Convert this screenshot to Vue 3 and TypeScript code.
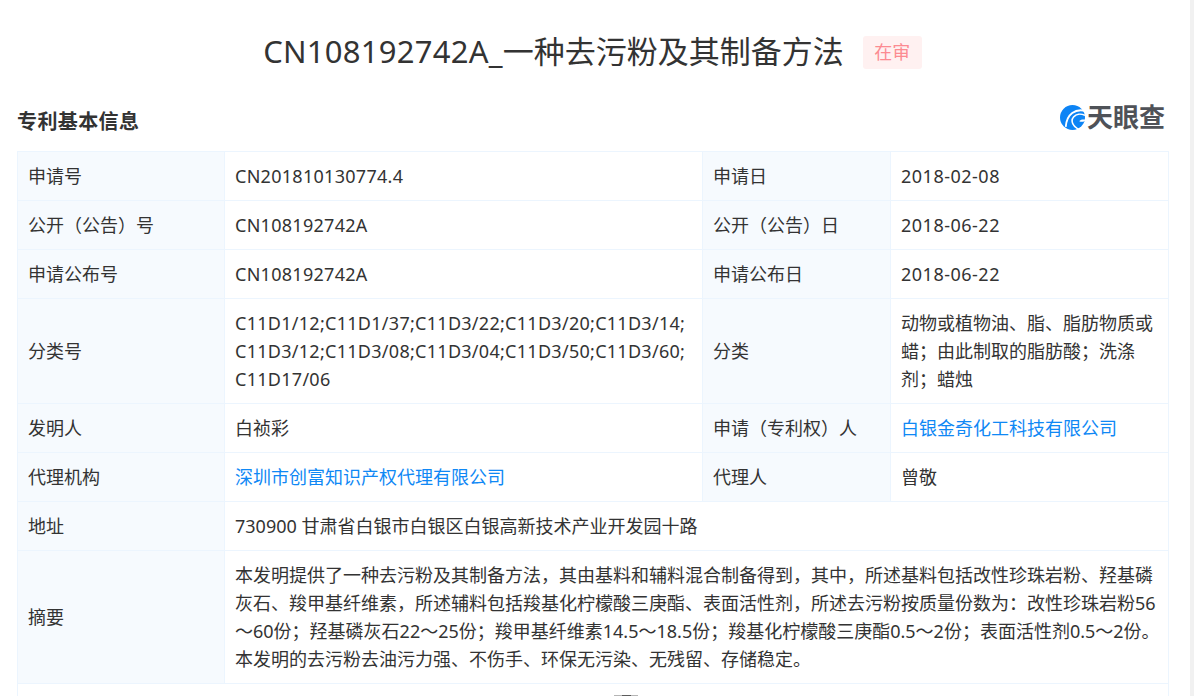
<script setup lang="ts">
interface Row { l1: string; v1: string; num1?: boolean; link1?: boolean; l2?: string; v2?: string; num2?: boolean; link2?: boolean }
const zw = '\u200b'
const rows: Row[] = [
  { l1: '申请号', v1: 'CN201810130774.4', num1: true, l2: '申请日', v2: '2018-02-08', num2: true },
  { l1: '公开（公告）号', v1: 'CN108192742A', num1: true, l2: '公开（公告）日', v2: '2018-06-22', num2: true },
  { l1: '申请公布号', v1: 'CN108192742A', num1: true, l2: '申请公布日', v2: '2018-06-22', num2: true },
  { l1: '分类号', v1: ['C11D1/12;', 'C11D1/37;', 'C11D3/22;', 'C11D3/20;', 'C11D3/14;', 'C11D3/12;', 'C11D3/08;', 'C11D3/04;', 'C11D3/50;', 'C11D3/60;', 'C11D17/06'].join(zw), num1: true, l2: '分类', v2: '动物或植物油、脂、脂肪物质或蜡；由此制取的脂肪酸；洗涤剂；蜡烛' },
  { l1: '发明人', v1: '白祯彩', l2: '申请（专利权）人', v2: '白银金奇化工科技有限公司', link2: true },
  { l1: '代理机构', v1: '深圳市创富知识产权代理有限公司', link1: true, l2: '代理人', v2: '曾敬' },
  { l1: '地址', v1: '730900 甘肃省白银市白银区白银高新技术产业开发园十路' },
  { l1: '摘要', v1: '本发明提供了一种去污粉及其制备方法，其由基料和辅料混合制备得到，其中，所述基料包括改性珍珠岩粉、羟基磷灰石、羧甲基纤维素，所述辅料包括羧基化柠檬酸三庚酯、表面活性剂，所述去污粉按质量份数为：改性珍珠岩粉56～60份；羟基磷灰石22～25份；羧甲基纤维素14.5～18.5份；羧基化柠檬酸三庚酯0.5～2份；表面活性剂0.5～2份。本发明的去污粉去油污力强、不伤手、环保无污染、无残留、存储稳定。' },
]
</script>

<template>
  <div class="page">
    <main class="content">
      <div class="title-row">
        <h1 class="title"><span class="title-num">CN108192742A_</span>一种去污粉及其制备方法</h1>
        <span class="tag">在审</span>
      </div>
      <div class="section-head">
        <h2 class="section-title">专利基本信息</h2>
        <div class="logo">
          <svg class="logo-mark" viewBox="0 0 24 24" width="25" height="25">
            <circle cx="12" cy="12" r="12" fill="#0d84f5" />
            <path d="M24 5.500C15 3.500 6.500 8 5.500 21" fill="none" stroke="#fff" stroke-width="1.800" />
            <path d="M19 24C12 21 10 15 13 11.500c2.500-3 7-3.500 11-1.500" fill="none" stroke="#fff" stroke-width="1.500" />
            <path d="M24 15c-2 1.500-4 1.500-5.500.5 1-1.500 3-2 5.500-1.500z" fill="#fff" />
          </svg>
          <span class="logo-text">天眼查</span>
        </div>
      </div>
      <table class="info">
        <colgroup>
          <col class="c1" /><col class="c2" /><col class="c3" /><col class="c4" />
        </colgroup>
        <tbody>
          <tr v-for="r in rows" :key="r.l1">
            <th>{{ r.l1 }}</th>
            <td :colspan="r.l2 ? 1 : 3" :class="{ link: r.link1, num: r.num1 }">{{ r.v1 }}</td>
            <template v-if="r.l2">
              <th>{{ r.l2 }}</th>
              <td :class="{ link: r.link2, date: r.num2 }">{{ r.v2 }}</td>
            </template>
          </tr>
          <tr class="tail">
            <td colspan="4"><div class="tail-mark"></div></td>
          </tr>
        </tbody>
      </table>
    </main>
    <div class="scrollbar"></div>
  </div>
</template>

<style>
html, body { margin: 0; background: #fff; overflow: hidden; }
</style>

<style scoped>
.page {
  width: 1194px;
  height: 696px;
  display: flex;
  overflow: hidden;
  font-family: "Noto Sans", "Noto Sans CJK SC", sans-serif;
  color: #333;
}
.content { width: 1190px; flex: none; padding: 0 22px 0 17px; box-sizing: border-box; }
.scrollbar { width: 4px; background: #f1f1f1; flex: none; }
.title-row {
  display: flex;
  justify-content: center;
  align-items: center;
  gap: 19px;
  padding-top: 30px;
  height: 44px;
}
.title { margin: 0; padding-bottom: 2px; font-size: 31px; font-weight: 400; line-height: 42px; white-space: nowrap; }
.title-num { letter-spacing: 0.25px; }
.tag {
  width: 59px;
  height: 33px;
  line-height: 33px;
  text-align: center;
  background: #fff1f1;
  color: #fc8b91;
  border-radius: 3px;
  font-size: 18px;
}
.section-head {
  display: flex;
  justify-content: space-between;
  align-items: flex-start;
  height: 36px;
  margin-top: 30px;
  margin-bottom: 11px;
}
.section-title { margin: 0; font-size: 20px; font-weight: 700; line-height: 36px; letter-spacing: 0.4px; color: #333; }
.logo { display: flex; align-items: center; margin: -3px 3px 0 0; gap: 2px; }
.logo-mark { display: block; }
.logo-text { font-size: 26px; font-weight: 700; color: #4f5258; line-height: 32px; }
.info { width: 1151px; border-collapse: collapse; table-layout: fixed; font-size: 18px; line-height: 28px; }
.c1 { width: 207px; }
.c2 { width: 478px; }
.c3 { width: 188px; }
.c4 { width: 278px; }
th, td { border: 1px solid #ecf5fe; padding: 10px 6px 10px 10px; text-align: left; font-weight: 400; }
th { background: #f6fafe; }
.num { letter-spacing: 0.28px; }
.date { letter-spacing: 0.5px; }
.link { color: #0f88f5; }
.tail td { height: 40px; padding: 0; vertical-align: top; }
.tail-mark {
  width: 24px;
  height: 12px;
  margin: 11px 0 0 596px;
  background: linear-gradient(90deg, #b5b5b5 0 35%, #5c5c5c 35% 70%, #b5b5b5 70%);
}
</style>
